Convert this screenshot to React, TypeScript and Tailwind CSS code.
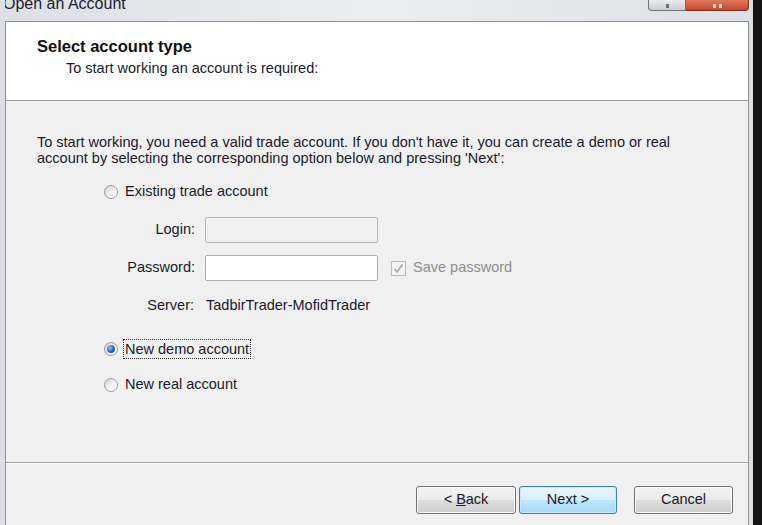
import React from 'react';

const font = { fontFamily: '"Liberation Sans", Arial, sans-serif' };

function Radio({ checked }: { checked?: boolean }) {
  return (
    <span className="flex h-[14px] w-[14px] shrink-0 items-center justify-center rounded-full border border-[#9a9a9a] bg-[linear-gradient(135deg,#d4d4d4,#f6f6f6_60%,#ffffff)]">
      {checked && (
        <span className="h-[8px] w-[8px] rounded-full bg-[radial-gradient(circle_at_35%_35%,#9cc4f0,#2a62b8_55%,#163f80)]" />
      )}
    </span>
  );
}

function WinButton({ label, primary }: { label: React.ReactNode; primary?: boolean }) {
  return (
    <button
      className={`flex h-[28px] w-full items-center justify-center rounded-[3px] border text-[14.5px] text-[#1a1a2a] ${
        primary
          ? 'border-[#3c7fb1] bg-[linear-gradient(#eaf6fd,#d9f0fc_50%,#bee6fd_51%,#a7d9f5)] shadow-[inset_0_0_0_1px_#c5e9fb]'
          : 'border-[#707070] bg-[linear-gradient(#f2f2f2,#ebebeb_50%,#dddddd_51%,#cfcfcf)] shadow-[inset_0_0_0_1px_#fbfbfb]'
      }`}
    >
      {label}
    </button>
  );
}

export default function App() {
  return (
    <div className="flex h-[525px] w-[762px] overflow-hidden bg-[#111]" style={font}>
      <div className="flex w-[753px] flex-col bg-[linear-gradient(90deg,#dce0e5,#eceef0_50%,#dce0e5)] pl-[5px] pr-[4px]">
        {/* title bar */}
        <div className="flex h-[21px] shrink-0 items-start justify-between overflow-hidden">
          <span className="-ml-[2px] -mt-[5px] text-[16px] leading-[18px] text-[#1c2233]">Open an Account</span>
          <div className="flex">
            <div className="flex h-[11px] w-[38px] items-end justify-center rounded-bl-[4px] border border-t-0 border-[#6d7480] bg-[linear-gradient(#e8ebef,#c9ced6)]">
              <span className="mb-[2px] h-[4px] w-[3px] bg-[#6a6f78]" />
            </div>
            <div className="flex h-[11px] w-[63px] items-end justify-center gap-[3px] rounded-br-[4px] border border-l-0 border-t-0 border-[#7a3020] bg-[linear-gradient(#e0785e,#c8452c)]">
              <span className="mb-[2px] h-[4px] w-[3px] bg-[#f6d8d0]" />
              <span className="mb-[2px] h-[4px] w-[3px] bg-[#f6d8d0]" />
            </div>
          </div>
        </div>

        {/* dialog content */}
        <div className="flex flex-1 flex-col border border-b-0 border-[#8f8f8f] bg-[#f0f0f0]">
          <div className="h-[79px] shrink-0 border-b border-[#a0a0a0] bg-white pl-[31px] pt-[16px]">
            <div className="text-[16.5px] font-bold leading-[16px] text-[#111]">Select account type</div>
            <div className="ml-[29px] mt-[6px] text-[14.5px] leading-[16px] text-[#1a1a2a]">
              To start working an account is required:
            </div>
          </div>

          <div className="h-[362px] shrink-0 border-b border-[#a0a0a0] pl-[31px] pt-[33px] text-[14.5px] text-[#1a1a2a] shadow-[0_1px_0_#ffffff]">
            <p className="leading-[16px]">
              To start working, you need a valid trade account. If you don't have it, you can create a demo or real
              <br />
              account by selecting the corresponding option below and pressing 'Next':
            </p>

            <div className="ml-[67px] mt-[16px] flex h-[20px] items-center gap-[7px]">
              <Radio />
              <span>Existing trade account</span>
            </div>

            <div className="ml-[67px] mt-[15px] flex h-[26px] items-center">
              <span className="w-[91px] text-right">Login:</span>
              <div className="ml-[10px] h-[26px] w-[173px] rounded-[2px] border border-[#b5b5b5] bg-[#f2f2f2]" />
            </div>

            <div className="ml-[67px] mt-[12px] flex h-[26px] items-center">
              <span className="w-[91px] text-right">Password:</span>
              <div className="ml-[10px] h-[26px] w-[173px] rounded-[2px] border border-[#abadb3] bg-white" />
              <div className="ml-[13px] flex items-center gap-[7px] text-[#8d8d8d]">
                <span className="flex h-[15px] w-[15px] items-center justify-center border border-[#b8b8b8] bg-[#f4f4f4]">
                  <svg width="11" height="11" viewBox="0 0 11 11">
                    <path d="M1.5 6 L4 9 L9.5 1.5" fill="none" stroke="#a8a8a8" strokeWidth="1.6" />
                  </svg>
                </span>
                <span>Save password</span>
              </div>
            </div>

            <div className="ml-[67px] mt-[15px] flex h-[20px] items-center">
              <span className="w-[90px] text-right">Server:</span>
              <span className="ml-[12px]">TadbirTrader-MofidTrader</span>
            </div>

            <div className="ml-[67px] mt-[22px] flex h-[22px] items-center gap-[5px]">
              <Radio checked />
              <span className="border border-dotted border-[#333] px-[1px] leading-[18px]">New demo account</span>
            </div>

            <div className="ml-[67px] mt-[15px] flex h-[20px] items-center gap-[7px]">
              <Radio />
              <span>New real account</span>
            </div>
          </div>

          <div className="flex flex-1 items-start justify-end pr-[15px] pt-[23px]">
            <div className="flex items-center">
              <div className="w-[100px]">
                <WinButton
                  label={
                    <span>
                      &lt; <span className="underline">B</span>ack
                    </span>
                  }
                />
              </div>
              <div className="ml-[3px] w-[98px]">
                <WinButton primary label="Next >" />
              </div>
              <div className="ml-[17px] w-[99px]">
                <WinButton label="Cancel" />
              </div>
            </div>
          </div>
        </div>
      </div>
      <div className="flex-1 bg-[#141414]" />
    </div>
  );
}
